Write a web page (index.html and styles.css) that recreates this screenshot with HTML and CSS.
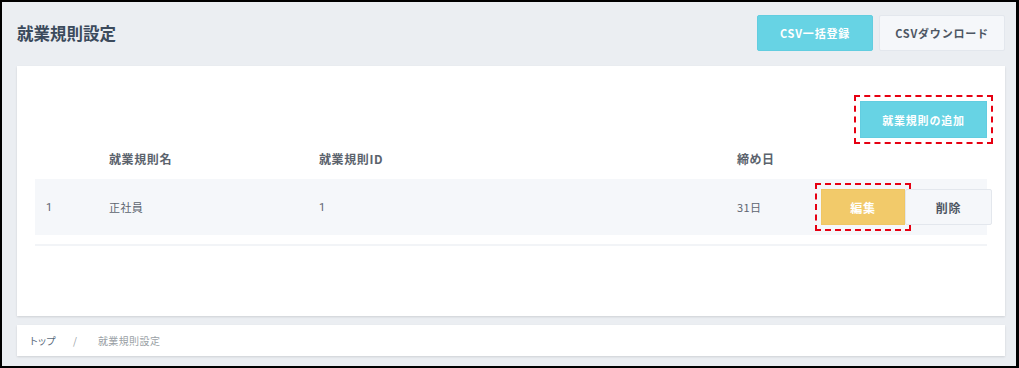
FILE: index.html
```html
<!DOCTYPE html>
<html lang="ja">
  <head>
    <meta charset="UTF-8" />
    <meta name="viewport" content="width=device-width, initial-scale=1.0" />
    <title>就業規則設定</title>
    <link rel="stylesheet" href="styles.css">
  </head>
  <body>
    <div class="frame">
      <div class="page-header">
        <h1>就業規則設定</h1>
        <div class="header-actions">
          <button class="btn btn-info btn-wide">CSV一括登録</button>
          <button class="btn btn-light btn-wide">CSVダウンロード</button>
        </div>
      </div>

      <div class="card">
        <div class="toolbar">
          <button class="btn btn-info btn-add marked">就業規則の追加</button>
        </div>

        <div class="rules">
          <div class="rules-head">
            <span></span>
            <span>就業規則名</span>
            <span>就業規則ID</span>
            <span>締め日</span>
            <span></span>
          </div>
          <div class="rules-row">
            <span class="num">1</span>
            <span>正社員</span>
            <span class="num">1</span>
            <span>31日</span>
            <span class="row-actions">
              <button class="btn btn-warning btn-edit marked">編集</button>
              <button class="btn btn-light btn-delete">削除</button>
            </span>
          </div>
        </div>
      </div>

      <div class="breadcrumb">
        <span class="crumb-link">トップ</span>
        <span class="crumb-sep">/</span>
        <span class="crumb-current">就業規則設定</span>
      </div>
    </div>
  </body>
</html>
```

FILE: styles.css
```css
body {
  margin: 0;
  background: #000;
  font-family: "Noto Sans CJK JP", "Noto Sans", sans-serif;
  font-feature-settings: "palt";
}
.frame {
  margin: 2px 3px 2px 2px;
  height: 364px;
  box-sizing: border-box;
  background: #ebeef2;
  padding: 13px 11px 0 15px;
}
.page-header {
  display: flex;
  justify-content: space-between;
  align-items: center;
  height: 36px;
}
h1 {
  margin: 0;
  font-size: 16.5px;
  font-weight: bold;
  color: #3b4a5c;
}
.header-actions {
  display: flex;
  gap: 6px;
}
.btn {
  height: 36px;
  border: 1px solid transparent;
  border-radius: 2px;
  font-family: inherit;
  font-size: 11px;
  font-weight: bold;
  letter-spacing: 0.8px;
  cursor: pointer;
  padding: 0;
}
.btn-wide {
  width: 116px;
}
.btn-light.btn-wide {
  width: 126px;
}
.btn-info {
  background: #67d3e4;
  border-color: #62cde0;
  color: #fff;
}
.btn-light {
  background: #f5f7fa;
  border-color: #e3e7ed;
  color: #4d5663;
}
.btn-warning {
  background: #f2ca6a;
  border-color: #f0c664;
  color: #fff;
  font-size: 12px;
}
.btn-delete {
  font-size: 12px;
}
.marked {
  border-radius: 0;
  outline: 2px dashed #e60012;
  outline-offset: 4px;
}
.card {
  margin-top: 15px;
  height: 250px;
  box-sizing: border-box;
  background: #fff;
  padding: 35px 18px 0 18px;
  box-shadow: 0 1px 2px rgba(0, 0, 0, 0.12);
}
.toolbar {
  display: flex;
  justify-content: flex-end;
}
.btn-add {
  width: 127px;
  height: 37px;
}
.rules {
  border-bottom: 2px solid #f2f4f7;
  padding-bottom: 9px;
}
.rules-head,
.rules-row {
  display: grid;
  grid-template-columns: 74px 210px 418px 84px 166px;
  align-items: center;
}
.rules-head {
  height: 41px;
  font-size: 12px;
  font-weight: bold;
  color: #5b636d;
  letter-spacing: 0.6px;
}
.rules-row {
  height: 56px;
  background: #f5f7fa;
  font-size: 11px;
  color: #5d6570;
  letter-spacing: 0.4px;
}
.rules-row .num:first-child {
  padding-left: 11px;
}
.num {
  font-family: Roboto, "Liberation Sans", sans-serif;
}
.row-actions {
  display: flex;
  width: 171px;
}
.btn-edit {
  width: 84px;
}
.btn-delete {
  width: 87px;
}
.breadcrumb {
  margin-top: 9px;
  height: 31px;
  box-sizing: border-box;
  background: #fff;
  padding-left: 13px;
  display: flex;
  align-items: center;
  font-size: 10px;
  box-shadow: 0 1px 2px rgba(0, 0, 0, 0.12);
}
.crumb-link {
  color: #5a6b7d;
  letter-spacing: 0.4px;
}
.crumb-sep {
  color: #9aa0a7;
  margin: 0 21px 0 17px;
}
.crumb-current {
  color: #9a9fa5;
  letter-spacing: 0.4px;
}
```
